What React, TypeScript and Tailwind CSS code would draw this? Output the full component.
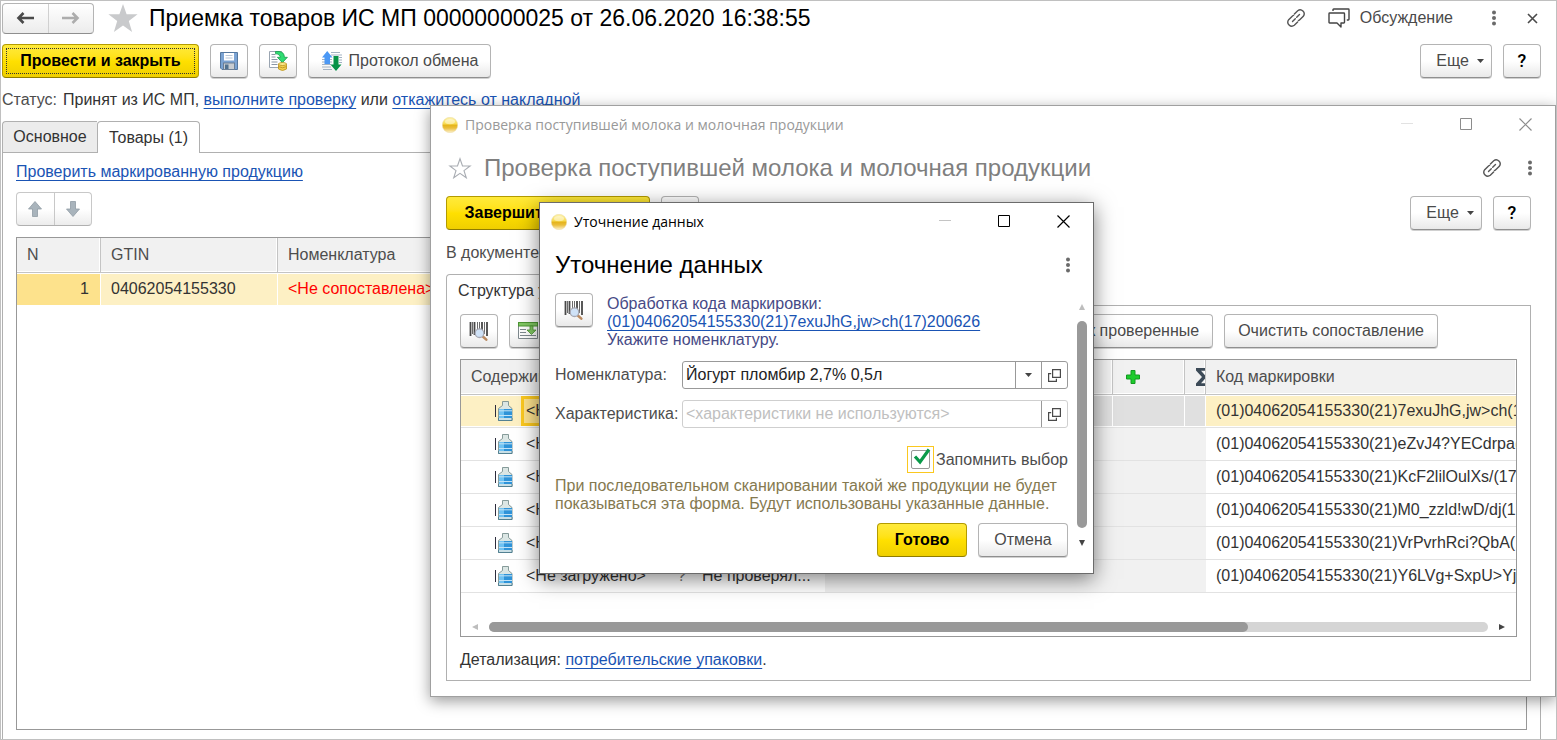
import type { ReactNode } from "react";

const BTN =
  "flex h-[34px] shrink-0 items-center justify-center rounded border border-[#b4b4b4] border-b-[#8f8f8f] bg-linear-to-b from-white from-50% to-[#e9e9e9] text-[#4a4a4a] shadow-[0_1px_0_#d0d0d0]";
const PRIMARY =
  "flex h-[34px] shrink-0 items-center justify-center rounded border border-[#b39b00] border-b-[#8f7c00] bg-linear-to-b from-[#ffea3a] via-[#ffe000] to-[#efcf00] font-bold text-black";
const LINK = "text-[#1a54b4] underline decoration-1 underline-offset-[3px]";

function LinkIcon() {
  return (
    <svg width="20" height="20" viewBox="0 0 20 20" fill="none" stroke="#555" strokeWidth="1.4" strokeLinecap="round">
      <path d="M8.4 6l3.300-3.300a4 4 0 0 1 5.600 5.600l-3.300 3.300a4 4 0 0 1-1.600 1" />
      <path d="M11.600 14l-3.300 3.300a4 4 0 0 1-5.600-5.600L6 8.400a4 4 0 0 1 1.600-1" />
      <path d="M6.500 13.500l2.800-2.800M10.700 9.300l2.800-2.800" />
    </svg>
  );
}

function ChatIcon() {
  return (
    <svg width="22" height="20" viewBox="0 0 22 20" fill="none" stroke="#444" strokeWidth="1.4" strokeLinejoin="round">
      <path d="M5 3V1.700q0-.700.700-.700h14.600q.700 0 .700.700v9.600q0 .700-.700.700H18.800" />
      <path d="M1.700 5h14.100q.700 0 .700.700v8.600q0 .700-.700.700H13v4l-4-4H1.700q-.700 0-.700-.700V5.700q0-.700.700-.700z" />
    </svg>
  );
}

function Dots() {
  return (
    <svg width="6" height="16" viewBox="0 0 6 16" fill="#6a6a6a">
      <circle cx="3" cy="2.500" r="2" />
      <circle cx="3" cy="8" r="2" />
      <circle cx="3" cy="13.500" r="2" />
    </svg>
  );
}

function Star({ filled }: { filled?: boolean }) {
  return filled ? (
    <svg width="30" height="28" viewBox="0 0 30 28" fill="#c9cacc">
      <path d="M15 0l3.600 10.300H29.600L20.800 17l3.300 11L15 21.400 5.900 28l3.300-11L.4 10.300H11.400z" />
    </svg>
  ) : (
    <svg width="24" height="22" viewBox="0 0 24 22" fill="none" stroke="#a9adb3" strokeWidth="1.100">
      <path d="M12 1.800l2.500 7.200h7.600l-6.100 4.600 2.300 7.200L12 16.400l-6.300 4.400L8 13.600 1.900 9h7.600z" />
    </svg>
  );
}

function Orb() {
  return (
    <svg width="16" height="16" viewBox="0 0 16 16">
      <defs>
        <linearGradient id="orb" x1="0" y1="0" x2="0" y2="1">
          <stop offset="0" stopColor="#fdf3b0" />
          <stop offset=".42" stopColor="#f8dc50" />
          <stop offset=".52" stopColor="#e5b41c" />
          <stop offset=".7" stopColor="#ebbe3c" />
          <stop offset="1" stopColor="#fdf2cf" />
        </linearGradient>
      </defs>
      <circle cx="8" cy="8" r="7.700" fill="url(#orb)" stroke="#ead9a0" strokeWidth=".5" />
      <ellipse cx="8" cy="4.600" rx="5" ry="2.600" fill="#fff" opacity=".45" />
    </svg>
  );
}

function SaveIcon() {
  return (
    <svg width="20" height="20" viewBox="0 0 20 20">
      <path d="M1.500 1.500h17v17H3l-1.500-1.500z" fill="#7ba3d3" stroke="#55789f" />
      <rect x="5" y="2" width="10" height="7.500" fill="#fff" />
      <path d="M6.500 4.500h7M6.500 7h7" stroke="#b9c6d6" />
      <rect x="4.500" y="12" width="11" height="6.500" fill="#c7ccd1" stroke="#6b7f96" />
      <rect x="6" y="13.500" width="3.500" height="4.500" fill="#51718f" />
    </svg>
  );
}

function PostIcon() {
  return (
    <svg width="20" height="20" viewBox="0 0 20 20">
      <path d="M1.500.5h12v16h-12z" fill="#fff" stroke="#9aa5b1" />
      <path d="M3.500 3.500h4M3.500 6h4M3.500 8.500h6M3.500 11h6M3.500 13.500h6" stroke="#8b97a5" />
      <path d="M7.500.5h3.500q5.200.3 5.400 5.800h3l-5 5.400-5-5.400h2.900Q12.200 3.400 7.500 2.600z" fill="#2fdc72" stroke="#189c4c" strokeWidth=".8" />
      <path d="M10.500 13v5q4 3 8 0v-5z" fill="#f2cf4f" stroke="#b9901c" strokeWidth=".8" />
      <ellipse cx="14.500" cy="13" rx="4" ry="1.500" fill="#fbe88d" stroke="#b9901c" strokeWidth=".8" />
      <path d="M10.500 15.600q4 2.400 8 0" fill="none" stroke="#b9901c" strokeWidth=".8" />
    </svg>
  );
}

function ExchangeIcon() {
  return (
    <svg width="22" height="20" viewBox="0 0 22 20">
      <path d="M1 8.500h10M1 11h10M1 13.500h9M1 16h9M2 18.500h9M10 1.500h9M10 4h11M18 6.500h3M18 9h3M18 11.500h3" stroke="#a3b2c2" />
      <path d="M6.200 0l5.300 6.500H9V13H3.500V6.500H1z" fill="#4b98f5" />
      <path d="M12.500 5h5v8.500h3L15 20l-5.500-6.500h3z" fill="#079348" />
    </svg>
  );
}

function BarcodeIcon() {
  return (
    <svg width="20" height="20" viewBox="0 0 20 20">
      <path d="M1.500 1v14M5.500 1v13M13 1v12M18 1v14" stroke="#484848" strokeWidth="1.800" />
      <path d="M3.500 1v12M8.500 1v9M10.500 1v9M15.500 1v12" stroke="#6a6a6a" />
      <path d="M13.800 15.500l3.500 3.200" stroke="#bb8b62" strokeWidth="2.500" strokeLinecap="round" />
      <circle cx="10.500" cy="12.200" r="4.300" fill="#cfe2f7" stroke="#a7a9b4" strokeWidth="1.300" />
    </svg>
  );
}

function InsertRowsIcon() {
  return (
    <svg width="20" height="18" viewBox="0 0 20 18" className="shrink-0">
      <path d="M.5 4v12.500h19V4" fill="#fff" stroke="#7f898e" />
      <path d="M2 7.500h6M2 10.500h6M2 13.500h16" stroke="#7f898e" />
      <rect x=".5" y=".5" width="19" height="3.500" fill="#80c763" stroke="#4d9634" />
      <path d="M12 4h3v4h3l-4.500 4.500L9 8h3z" fill="#80c763" stroke="#4d9634" strokeWidth=".8" />
    </svg>
  );
}

function BottleIcon() {
  return (
    <svg width="18" height="20" viewBox="0 0 18 20" className="shrink-0">
      <path d="M.5 4v12" stroke="#2c2c3c" />
      <path d="M7.500.5h6v4L17 7.500v12H3.500v-12l4-3z" fill="#dbe6e4" stroke="#7b9190" strokeWidth=".9" />
      <path d="M4 8h13v9H4z" fill="#2f93d8" />
      <path d="M4 8h5v9H4z" fill="#6fc2f2" />
      <path d="M4 9.800h13M4 14.500h13" stroke="#c3e3f6" />
      <path d="M3.500 17v2.500H17V17" fill="#c9dfe6" stroke="#4a7a8c" strokeWidth=".9" />
    </svg>
  );
}

function BlockArrow({ down }: { down?: boolean }) {
  return (
    <svg width="16" height="16" viewBox="0 0 16 16">
      <path
        d={down ? "M5.500.5h5V8h4L8 15.500 1.500 8h4z" : "M5.500 15.500h5V8h4L8 .5 1.500 8h4z"}
        fill="#a9b4bc"
        stroke="#919ca4"
        strokeWidth=".8"
      />
    </svg>
  );
}

function NavArrow({ right }: { right?: boolean }) {
  return (
    <svg width="18" height="14" viewBox="0 0 18 14" fill="none" strokeWidth="2.600" stroke={right ? "#adadad" : "#4a4a4a"}>
      <path d={right ? "M0 7h15M10.500 2L15.500 7l-5 5" : "M18 7H3M7.500 2L2.500 7l5 5"} />
    </svg>
  );
}

function Caret() {
  return (
    <svg width="7" height="4" viewBox="0 0 7 4" fill="#444">
      <path d="M0 0h7L3.500 4z" />
    </svg>
  );
}

function OpenIcon() {
  return (
    <svg width="13" height="13" viewBox="0 0 13 13" fill="none" stroke="#4a4a4a" strokeWidth="1.200">
      <path d="M4.600.6h7.800v7.800H4.600z" />
      <path d="M3.200 4.600H.6v7.800h7.800V9.800" />
    </svg>
  );
}

function Tool({ label, children }: { label: string; children: ReactNode }) {
  return (
    <button type="button" aria-label={label} className={`${BTN} w-[38px]`}>
      {children}
    </button>
  );
}

function MoreAndHelp() {
  return (
    <div className="ml-auto flex gap-[11px]">
      <button type="button" className={`${BTN} w-[72px] gap-2 pl-2`}>
        Еще <Caret />
      </button>
      <button type="button" className={`${BTN} w-[38px] font-[Roboto] text-[18px] font-medium text-black`}>
        ?
      </button>
    </div>
  );
}

function TitleBar({ title, active }: { title: string; active?: boolean }) {
  const ink = active ? "#000" : "#8c8c8c";
  return (
    <div className={`flex h-[37px] items-center pl-[11px] font-['Open_Sans','Noto_Sans',sans-serif] text-[14px] ${active ? "text-black" : "text-[#999]"}`}>
      <Orb />
      <span className="ml-[7px] flex-1 whitespace-nowrap">{title}</span>
      <button type="button" aria-label="Свернуть" className="flex w-[59px] justify-center">
        <svg width="13" height="13" viewBox="0 0 13 13" stroke={active ? "#c4c4c4" : "#e2e2e2"}>
          <path d="M0 5.500h12" />
        </svg>
      </button>
      <button type="button" aria-label="Развернуть" className="flex w-[59px] justify-center">
        <svg width="13" height="13" viewBox="0 0 13 13" fill="none" stroke={ink}>
          <path d="M.5.5h11v11H.5z" />
        </svg>
      </button>
      <button type="button" aria-label="Закрыть" className="flex w-[59px] justify-center">
        <svg width="13" height="13" viewBox="0 0 13 13" fill="none" stroke={ink} strokeWidth="1.200">
          <path d="M.5.5l12 12M12.500.5l-12 12" />
        </svg>
      </button>
    </div>
  );
}

const CODES = [
  "(01)04062054155330(21)7exuJhG,jw>ch(17)200626",
  "(01)04062054155330(21)eZvJ4?YECdrpa(17)200626",
  "(01)04062054155330(21)KcF2lilOulXs/(17)200626",
  "(01)04062054155330(21)M0_zzld!wD/dj(17)200626",
  "(01)04062054155330(21)VrPvrhRci?QbA(17)200626",
  "(01)04062054155330(21)Y6LVg+SxpU>Yj(17)200626",
];

function CheckWindow() {
  const head = "border-r border-b border-[#c4c4c4] bg-[#f1f1f1] text-left font-normal text-[#4d4d4d] shadow-[inset_-1px_-1px_0_#fff]";
  return (
    <section className="absolute top-[104px] right-0 left-[429px] isolate border border-[#a0a0a0] bg-white pb-[15px] shadow-[0_4px_14px_rgba(0,0,0,0.4)]">
      <TitleBar title="Проверка поступившей молока и молочная продукции" />
      <div className="mb-1 flex h-[49px] items-center pr-[22px] pl-[17px]">
        <Star />
        <h2 className="ml-3 flex-1 text-[24px] whitespace-nowrap text-[#7f7f7f]">
          Проверка поступившей молока и молочная продукции
        </h2>
        <button type="button" aria-label="Получить ссылку">
          <LinkIcon />
        </button>
        <button type="button" aria-label="Меню" className="ml-[25px]">
          <Dots />
        </button>
      </div>
      <div className="flex gap-[11px] pr-6 pl-[15px]">
        <button type="button" className={`${PRIMARY} w-[204px]`}>
          Завершить проверку
        </button>
        <Tool label="Записать">
          <SaveIcon />
        </Tool>
        <MoreAndHelp />
      </div>
      <p className="px-[15px] pt-[11px] leading-6 text-[#4d4d4d]">В документе:</p>
      <div className="mt-[9px] flex pl-[15px]">
        <button type="button" className="relative z-10 -mb-px h-8 rounded-t border border-b-0 border-[#b0b0b0] bg-white px-[11px] text-[#333]">
          Структура упаковок
        </button>
      </div>
      <div className="mr-6 ml-[15px] border border-[#b0b0b0] px-[13px] pt-2 pb-2">
        <div className="flex gap-[11px]">
          <Tool label="Поиск по штрихкоду">
            <BarcodeIcon />
          </Tool>
          <Tool label="Добавить строки">
            <InsertRowsIcon />
          </Tool>
          <button type="button" className={`${BTN} ml-auto px-[13px]`}>
            Отметить как проверенные
          </button>
          <button type="button" className={`${BTN} mr-[79px] px-[13px]`}>
            Очистить сопоставление
          </button>
        </div>
        <div className="mt-[11px] overflow-hidden border border-[#989898]">
          <table className="w-full table-fixed border-separate border-spacing-0">
            <colgroup>
              <col className="w-[204px]" />
              <col className="w-[26px]" />
              <col className="w-[134px]" />
              <col className="w-[288px]" />
              <col className="w-[72px]" />
              <col className="w-[21px]" />
              <col />
            </colgroup>
            <thead>
              <tr className="h-[35px]">
                <th className={`${head} pl-[10px]`}>Содержимое</th>
                <th className={head} />
                <th className={head} />
                <th className={head} />
                <th className={`${head} pl-[13px]`}>
                  <svg width="14" height="14" viewBox="0 0 14 14" aria-label="Добавлено">
                    <path d="M5 .5h4V5h4.500v4H9v4.500H5V9H.5V5H5z" fill="#1ccb2c" stroke="#139a20" />
                  </svg>
                </th>
                <th className={`${head} overflow-hidden pl-[11px]`}>
                  <svg width="14" height="18" viewBox="0 0 14 18" className="max-w-none" aria-label="Итог">
                    <path d="M0 0h14v4h-2V2.800H5L10.500 9 5 15.200h7V14h2v4H0v-2.400L6 9 0 2.400z" fill="#3c4a57" />
                  </svg>
                </th>
                <th className={`${head} border-r-0 pl-[10px]`}>Код маркировки</th>
              </tr>
            </thead>
            <tbody>
              {CODES.map((code, i) => {
                const line = "border-b border-[#e2e2e2]";
                const own = i === 0 ? "bg-[#fdf0c4] shadow-[inset_0_1px_0_#fff,inset_0_-1px_0_#fff]" : "";
                const grey = i === 0 ? "bg-[#e0e0e0] shadow-[inset_-1px_1px_0_#fff,inset_0_-1px_0_#fff]" : "bg-[#f1f1f1]";
                return (
                  <tr key={code} className="h-[33px] text-[#333]">
                    <td className={`${line} ${own} p-0`}>
                      <div className="flex h-8 items-center pl-[34px]">
                        <BottleIcon />
                        <span
                          className={
                            i === 0
                              ? "ml-2 flex h-[30px] flex-1 items-center border-[3px] border-[#fbc81f] bg-[#fde28c] pl-[2px]"
                              : "ml-2 flex h-[30px] flex-1 items-center pl-[5px]"
                          }
                        >
                          {"<Не загружено>"}
                        </span>
                      </div>
                    </td>
                    <td className={`${line} ${own} pl-3 text-[#777]`}>?</td>
                    <td className={`${line} ${own} truncate pl-[11px]`}>Не проверял...</td>
                    <td className={`${line} ${grey}`} />
                    <td className={`${line} ${grey}`} />
                    <td className={`${line} ${grey}`} />
                    <td className={`${line} ${own} overflow-hidden pl-[10px] whitespace-nowrap`}>{code}</td>
                  </tr>
                );
              })}
            </tbody>
          </table>
          <div className="mt-[29px] mb-1 flex items-center pr-[11px] pl-[11px]">
            <svg width="6" height="6" viewBox="0 0 6 6" fill="#bdbdbd">
              <path d="M6 0v6L0 3z" />
            </svg>
            <div className="mx-[11px] h-[10px] flex-1 rounded-full bg-[#d5d5d5]">
              <div className="h-full w-[76%] rounded-full bg-[#999]" />
            </div>
            <svg width="6" height="6" viewBox="0 0 6 6" fill="#444">
              <path d="M0 0v6l6-3z" />
            </svg>
          </div>
        </div>
        <p className="mt-[11px] leading-6 text-[#333]">
          Детализация:{" "}
          <a href="#packs" className={LINK}>
            потребительские упаковки
          </a>
          .
        </p>
      </div>
    </section>
  );
}

function RefineDialog() {
  return (
    <section
      role="dialog"
      aria-label="Уточнение данных"
      className="absolute top-[201px] left-[538px] z-20 w-[555px] border border-[#6b6b6b] bg-white shadow-[0_5px_20px_rgba(0,0,0,0.5)]"
    >
      <TitleBar title="Уточнение данных" active />
      <div className="flex h-[50px] items-center justify-between pr-[22px] pl-[15px]">
        <h2 className="text-[24px] text-black">Уточнение данных</h2>
        <button type="button" aria-label="Меню">
          <Dots />
        </button>
      </div>
      <div className="flex pr-[6px] pb-4 pl-[15px]">
        <form className="min-w-0 flex-1">
          <div className="flex gap-[14px] pt-[3px]">
            <Tool label="Штрихкод">
              <BarcodeIcon />
            </Tool>
            <p className="pt-[2px] leading-[18px] text-[#474a86]">
              Обработка кода маркировки:
              <br />
              <a href="#code" className={LINK}>
                {"(01)04062054155330(21)7exuJhG,jw>ch(17)200626"}
              </a>
              <br />
              Укажите номенклатуру.
            </p>
          </div>
          <div className="mt-[12px] flex items-center">
            <label htmlFor="item" className="w-[127px] text-[#4d4d4d]">
              Номенклатура:
            </label>
            <div className="flex h-7 flex-1 rounded-[3px] border border-[#999]">
              <input id="item" defaultValue="Йогурт пломбир 2,7% 0,5л" className="min-w-0 flex-1 px-[3px] text-[#222] outline-none" />
              <button type="button" aria-label="Выбрать" className="flex w-[26px] items-center justify-center border-l border-[#999]">
                <Caret />
              </button>
              <button type="button" aria-label="Открыть" className="flex w-[26px] items-center justify-center border-l border-[#999]">
                <OpenIcon />
              </button>
            </div>
          </div>
          <div className="mt-[11px] flex items-center">
            <label htmlFor="feature" className="w-[127px] text-[#4d4d4d]">
              Характеристика:
            </label>
            <div className="flex h-7 flex-1 rounded-[3px] border border-[#cfcfcf]">
              <input
                id="feature"
                disabled
                placeholder="<характеристики не используются>"
                className="min-w-0 flex-1 px-[3px] placeholder:text-[#c0c0c0]"
              />
              <button type="button" aria-label="Открыть" className="flex w-[26px] items-center justify-center border-l border-[#999]">
                <OpenIcon />
              </button>
            </div>
          </div>
          <div className="mt-[18px] flex justify-end">
            <label className="flex items-center gap-[2px] text-[#4d4d4d]">
              <span className="relative flex size-[27px] items-center justify-center border border-[#fbc81f]">
                <input type="checkbox" defaultChecked className="peer size-[19px] appearance-none rounded-[2px] border border-[#999] bg-white" />
                <svg width="18" height="18" viewBox="0 0 18 18" className="pointer-events-none absolute top-[1px] left-[5px] hidden peer-checked:block" fill="none" stroke="#0a9a4a" strokeWidth="3.200">
                  <path d="M2 8.500l5 5.500L16 1.500" />
                </svg>
              </span>
              Запомнить выбор
            </label>
          </div>
          <p className="mt-1 leading-[18px] whitespace-nowrap text-[#85794f]">
            При последовательном сканировании такой же продукции не будет
            <br />
            показываться эта форма. Будут использованы указанные данные.
          </p>
          <div className="mt-[10px] flex justify-end gap-[11px]">
            <button type="button" className={`${PRIMARY} w-[90px]`}>
              Готово
            </button>
            <button type="button" className={`${BTN} w-[90px]`}>
              Отмена
            </button>
          </div>
        </form>
        <div className="mt-[14px] mb-[11px] ml-[9px] flex w-[10px] flex-col items-center">
          <svg width="6" height="6" viewBox="0 0 6 6" fill="#bdbdbd">
            <path d="M0 6h6L3 0z" />
          </svg>
          <div className="mt-[11px] mb-3 w-full flex-1 rounded-full bg-[#999]" />
          <svg width="6" height="6" viewBox="0 0 6 6" fill="#444">
            <path d="M0 0h6L3 6z" />
          </svg>
        </div>
      </div>
    </section>
  );
}

export default function App() {
  const head = "border-r border-b border-[#c4c4c4] bg-[#f1f1f1] pl-[10px] text-left font-normal text-[#4d4d4d] shadow-[inset_-1px_-1px_0_#fff]";
  const cell = "border-r border-white bg-[#fdf0c4] pl-[10px] shadow-[inset_0_1px_0_#fff]";
  return (
    <main className="relative flex min-h-screen flex-col overflow-hidden border border-[#c0c0c0] bg-white font-['Liberation_Sans',Arial,sans-serif] text-[16px] leading-5">
      <header className="flex h-[34px] items-center pr-[18px] pl-px">
        <div className="flex h-[31px] w-[92px] rounded border border-[#b4b4b4] border-b-[#8f8f8f] bg-linear-to-b from-white to-[#ececec]">
          <button type="button" aria-label="Назад" className="flex flex-1 items-center justify-center">
            <NavArrow />
          </button>
          <button type="button" aria-label="Вперед" className="flex flex-1 items-center justify-center border-l border-[#d0d0d0]">
            <NavArrow right />
          </button>
        </div>
        <button type="button" aria-label="В избранное" className="ml-[14px]">
          <Star filled />
        </button>
        <h1 className="ml-[11px] flex-1 text-[23px] leading-7 whitespace-nowrap text-black">
          Приемка товаров ИС МП 00000000025 от 26.06.2020 16:38:55
        </h1>
        <button type="button" aria-label="Получить ссылку">
          <LinkIcon />
        </button>
        <button type="button" className="ml-[22px] flex items-center gap-[10px] text-[#4a4a4a]">
          <ChatIcon /> Обсуждение
        </button>
        <button type="button" aria-label="Меню" className="ml-[38px]">
          <Dots />
        </button>
        <button type="button" aria-label="Закрыть" className="ml-[30px]">
          <svg width="11" height="11" viewBox="0 0 11 11" stroke="#4a4a4a" strokeWidth="1.600">
            <path d="M1 1l9 9M10 1l-9 9" />
          </svg>
        </button>
      </header>

      <div className="mt-[9px] flex gap-[11px] pr-[15px] pl-px">
        <button type="button" className={`${PRIMARY} w-[197px] p-[3px]`}>
          <span className="flex h-full w-full items-center justify-center border border-dotted border-[#333]">Провести и закрыть</span>
        </button>
        <Tool label="Записать">
          <SaveIcon />
        </Tool>
        <Tool label="Провести">
          <PostIcon />
        </Tool>
        <button type="button" className={`${BTN} w-[183px] gap-[6px]`}>
          <ExchangeIcon /> Протокол обмена
        </button>
        <MoreAndHelp />
      </div>

      <p className="mt-[10px] pl-px leading-6 text-[#333]">
        <span className="mr-[6px] text-[#4d4d4d]">Статус:</span>Принят из ИС МП,{" "}
        <a href="#check" className={LINK}>
          выполните проверку
        </a>{" "}
        или{" "}
        <a href="#reject" className={LINK}>
          откажитесь от накладной
        </a>
      </p>

      <nav className="mt-[9px] flex pl-px">
        <button type="button" className="h-8 w-[95px] rounded-tl border border-r-0 border-[#b0b0b0] bg-[#ececec] text-[#333]">
          Основное
        </button>
        <button type="button" className="relative z-10 -mb-px h-8 w-[103px] rounded-t border border-b-0 border-[#b0b0b0] bg-white text-[#333]">
          Товары (1)
        </button>
      </nav>
      <div className="-mt-px mr-[15px] ml-px flex flex-1 flex-col border border-b-0 border-[#b0b0b0] px-[13px] pb-[9px]">
        <div className="pt-[7px] leading-6">
          <a href="#marked" className={LINK}>
            Проверить маркированную продукцию
          </a>
        </div>
        <div className="mt-2 flex h-[34px] w-[76px] rounded border border-[#c8c8c8] border-b-[#b0b0b0] bg-linear-to-b from-white from-50% to-[#ececec]">
          <button type="button" aria-label="Вверх" className="flex flex-1 items-center justify-center">
            <BlockArrow />
          </button>
          <button type="button" aria-label="Вниз" className="flex flex-1 items-center justify-center border-l border-[#c8c8c8]">
            <BlockArrow down />
          </button>
        </div>
        <div className="mt-[11px] flex-1 border border-[#989898]">
          <table className="w-full table-fixed border-separate border-spacing-0">
            <colgroup>
              <col className="w-[84px]" />
              <col className="w-[177px]" />
              <col />
            </colgroup>
            <thead>
              <tr className="h-[35px]">
                <th className={head}>N</th>
                <th className={head}>GTIN</th>
                <th className={head}>Номенклатура</th>
              </tr>
            </thead>
            <tbody>
              <tr className="h-8 text-[#333]">
                <td className="border-r border-white bg-[#fde28c] pr-[11px] text-right shadow-[inset_0_1px_0_#fff]">1</td>
                <td className={cell}>04062054155330</td>
                <td className={`${cell} text-[#f00]`}>{"<Не сопоставлена>"}</td>
              </tr>
            </tbody>
          </table>
        </div>
      </div>

      <CheckWindow />
      <RefineDialog />
    </main>
  );
}
